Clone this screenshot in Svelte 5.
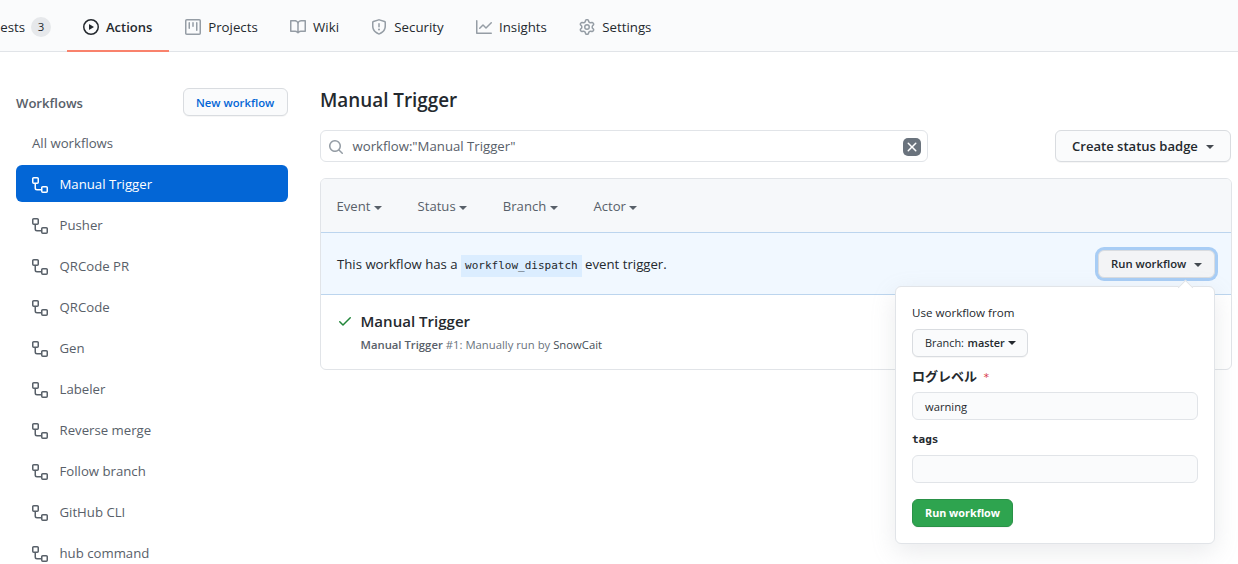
<script>
  const tabs = [
    { label: 'Actions', icon: 'play', active: true },
    { label: 'Projects', icon: 'project' },
    { label: 'Wiki', icon: 'book' },
    { label: 'Security', icon: 'shield' },
    { label: 'Insights', icon: 'graph' },
    { label: 'Settings', icon: 'gear' }
  ];

  const workflows = [
    'Manual Trigger', 'Pusher', 'QRCode PR', 'QRCode', 'Gen',
    'Labeler', 'Reverse merge', 'Follow branch', 'GitHub CLI', 'hub command'
  ];

  const filters = ['Event', 'Status', 'Branch', 'Actor'];

  const icons = {
    play: 'M1.5 8a6.5 6.5 0 1113 0 6.5 6.5 0 01-13 0zM8 0a8 8 0 100 16A8 8 0 008 0zM6.379 5.227A.25.25 0 006 5.442v5.117a.25.25 0 00.379.214l4.264-2.559a.25.25 0 000-.428L6.379 5.227z',
    project: 'M1.75 0A1.75 1.75 0 000 1.75v12.5C0 15.216.784 16 1.75 16h12.5A1.75 1.75 0 0016 14.25V1.75A1.75 1.75 0 0014.25 0H1.75zM1.5 1.75a.25.25 0 01.25-.25h12.5a.25.25 0 01.25.25v12.5a.25.25 0 01-.25.25H1.75a.25.25 0 01-.25-.25V1.75zM11.75 3a.75.75 0 00-.75.75v7.5a.75.75 0 001.5 0v-7.5a.75.75 0 00-.75-.75zm-8.25.75a.75.75 0 011.5 0v5.5a.75.75 0 01-1.5 0v-5.5zM8 3a.75.75 0 00-.75.75v3.5a.75.75 0 001.5 0v-3.5A.75.75 0 008 3z',
    book: 'M0 1.75A.75.75 0 01.75 1h4.253c1.227 0 2.317.59 3 1.501A3.744 3.744 0 0111.006 1h4.245a.75.75 0 01.75.75v10.5a.75.75 0 01-.75.75h-4.507a2.25 2.25 0 00-1.591.659l-.622.621a.75.75 0 01-1.06 0l-.622-.621A2.25 2.25 0 005.258 13H.75a.75.75 0 01-.75-.75V1.75zm8.755 3a2.25 2.25 0 012.25-2.25H14.5v9h-3.757c-.71 0-1.4.201-1.992.572l.004-7.322zm-1.504 7.324l.004-5.073-.002-2.253A2.25 2.25 0 005.003 2.5H1.5v9h3.757a3.75 3.75 0 011.994.574z',
    shield: 'M7.467.133a1.75 1.75 0 011.066 0l5.25 1.68A1.75 1.75 0 0115 3.48V7c0 1.566-.32 3.182-1.303 4.682-.983 1.498-2.585 2.813-5.032 3.855a1.7 1.7 0 01-1.33 0c-2.447-1.042-4.049-2.357-5.032-3.855C1.32 10.182 1 8.566 1 7V3.48a1.75 1.75 0 011.217-1.667l5.25-1.68zm.61 1.429a.25.25 0 00-.153 0l-5.25 1.68a.25.25 0 00-.174.238V7c0 1.358.275 2.666 1.057 3.86.784 1.194 2.121 2.34 4.366 3.297a.2.2 0 00.154 0c2.245-.956 3.582-2.104 4.366-3.298C13.225 9.666 13.5 8.36 13.5 7V3.48a.25.25 0 00-.174-.237l-5.25-1.68zM9 10.5a1 1 0 11-2 0 1 1 0 012 0zm-.25-5.75a.75.75 0 10-1.5 0v3a.75.75 0 001.5 0v-3z',
    graph: 'M1.5 1.75a.75.75 0 00-1.5 0v12.5c0 .414.336.75.75.75h14.5a.75.75 0 000-1.5H1.5V1.75zm14.28 2.53a.75.75 0 00-1.06-1.06L10 7.94 7.53 5.47a.75.75 0 00-1.06 0L3.22 8.72a.75.75 0 001.06 1.06L7 7.06l2.47 2.47a.75.75 0 001.06 0l5.25-5.25z',
    gear: 'M7.429 1.525a6.593 6.593 0 011.142 0c.036.003.108.036.137.146l.289 1.105c.147.56.55.967.997 1.189.174.086.341.183.501.29.417.278.97.423 1.53.27l1.102-.303c.11-.03.175.016.195.046.219.31.41.641.573.989.014.031.022.11-.059.19l-.815.806c-.411.406-.562.957-.53 1.456a4.588 4.588 0 010 .582c-.032.499.119 1.05.53 1.456l.815.806c.08.08.073.159.059.19a6.494 6.494 0 01-.573.99c-.02.029-.086.074-.195.045l-1.103-.303c-.559-.153-1.112-.008-1.529.27-.16.107-.327.204-.5.29-.449.222-.851.628-.998 1.189l-.289 1.105c-.029.11-.101.143-.137.146a6.613 6.613 0 01-1.142 0c-.036-.003-.108-.037-.137-.146l-.289-1.105c-.147-.56-.55-.967-.997-1.189a4.502 4.502 0 01-.501-.29c-.417-.278-.97-.423-1.53-.27l-1.102.303c-.11.03-.175-.016-.195-.046a6.492 6.492 0 01-.573-.989c-.014-.031-.022-.11.059-.19l.815-.806c.411-.406.562-.957.53-1.456a4.587 4.587 0 010-.582c.032-.499-.119-1.05-.53-1.456l-.815-.806c-.08-.08-.073-.159-.059-.19a6.44 6.44 0 01.573-.99c.02-.029.086-.075.195-.045l1.103.303c.559.153 1.112.008 1.529-.27.16-.107.327-.204.5-.29.449-.222.851-.628.998-1.189l.289-1.105c.029-.11.101-.143.137-.146zM8 0c-.236 0-.47.01-.701.03-.743.065-1.29.615-1.458 1.261l-.29 1.106c-.017.066-.078.158-.211.224a5.994 5.994 0 00-.668.386c-.123.082-.233.09-.3.071L3.27 2.776c-.644-.177-1.392.02-1.82.63a7.977 7.977 0 00-.704 1.217c-.315.675-.111 1.422.363 1.891l.815.806c.05.048.098.147.088.294a6.084 6.084 0 000 .772c.01.147-.038.246-.088.294l-.815.806c-.474.469-.678 1.216-.363 1.891.2.428.436.835.704 1.218.428.609 1.176.806 1.82.63l1.103-.303c.066-.019.176-.011.299.071.213.143.436.272.668.386.133.066.194.158.212.224l.289 1.106c.169.646.715 1.196 1.458 1.26a8.094 8.094 0 001.402 0c.743-.064 1.29-.614 1.458-1.26l.29-1.106c.017-.066.078-.158.211-.224a5.98 5.98 0 00.668-.386c.123-.082.233-.09.3-.071l1.102.302c.644.177 1.392-.02 1.82-.63.268-.382.505-.789.704-1.217.315-.675.111-1.422-.364-1.891l-.814-.806c-.05-.048-.098-.147-.088-.294a6.1 6.1 0 000-.772c-.01-.147.039-.246.088-.294l.814-.806c.475-.469.679-1.216.364-1.891a7.992 7.992 0 00-.704-1.218c-.428-.609-1.176-.806-1.82-.63l-1.103.303c-.066.019-.176.011-.299-.071a5.991 5.991 0 00-.668-.386c-.133-.066-.194-.158-.212-.224L10.16 1.29C9.99.645 9.444.095 8.701.031A8.094 8.094 0 008 0zm1.5 8a1.5 1.5 0 11-3 0 1.5 1.5 0 013 0zM11 8a3 3 0 11-6 0 3 3 0 016 0z',
    workflow: 'M0 1.75C0 .784.784 0 1.75 0h3.5C6.216 0 7 .784 7 1.75v3.5A1.75 1.75 0 015.25 7H4v4a1 1 0 001 1h4v-1.25C9 9.784 9.784 9 10.75 9h3.5c.966 0 1.75.784 1.75 1.75v3.5A1.75 1.75 0 0114.25 16h-3.5A1.75 1.75 0 019 14.25v-.75H5A2.5 2.5 0 012.5 11V7h-.75A1.75 1.75 0 010 5.25v-3.5zm1.75-.25a.25.25 0 00-.25.25v3.5c0 .138.112.25.25.25h3.5a.25.25 0 00.25-.25v-3.5a.25.25 0 00-.25-.25h-3.5zm9 9a.25.25 0 00-.25.25v3.5c0 .138.112.25.25.25h3.5a.25.25 0 00.25-.25v-3.5a.25.25 0 00-.25-.25h-3.5z',
    search: 'M11.5 7a4.499 4.499 0 11-8.998 0A4.499 4.499 0 0111.5 7zm-.82 4.74a6 6 0 111.06-1.06l3.04 3.04a.75.75 0 11-1.06 1.06l-3.04-3.04z',
    check: 'M13.78 4.22a.75.75 0 010 1.06l-7.25 7.25a.75.75 0 01-1.06 0L2.22 9.28a.75.75 0 011.06-1.06L6 10.94l6.72-6.72a.75.75 0 011.06 0z',
    x: 'M3.72 3.72a.75.75 0 011.06 0L8 6.94l3.22-3.22a.75.75 0 111.06 1.06L9.06 8l3.22 3.22a.75.75 0 11-1.06 1.06L8 9.06l-3.22 3.22a.75.75 0 01-1.06-1.06L6.94 8 3.72 4.78a.75.75 0 010-1.06z'
  };
</script>

{#snippet icon(name)}
  <svg class="icon" viewBox="0 0 16 16" width="16" height="16" aria-hidden="true">
    <path fill-rule="evenodd" d={icons[name]} />
  </svg>
{/snippet}

<div class="page">
  <nav class="tabs">
    <div class="tab clipped">uests<span class="counter">3</span></div>
    {#each tabs as tab}
      <div class="tab" class:active={tab.active}>{@render icon(tab.icon)}<span>{tab.label}</span></div>
    {/each}
  </nav>

  <div class="body">
    <aside>
      <div class="side-head">
        <h3>Workflows</h3>
        <button class="btn small link">New workflow</button>
      </div>
      <div class="side-item all">All workflows</div>
      {#each workflows as name, i}
        <div class="side-item" class:selected={i === 0}>{@render icon('workflow')}<span>{name}</span></div>
      {/each}
    </aside>

    <main>
      <h2>Manual Trigger</h2>
      <div class="toolbar">
        <div class="search">
          {@render icon('search')}
          <span class="query">workflow:"Manual Trigger"</span>
          <span class="clear">{@render icon('x')}</span>
        </div>
        <button class="btn badge-btn">Create status badge<i class="caret"></i></button>
      </div>

      <section class="box">
        <div class="filters">
          {#each filters as f}
            <span class="filter">{f}<i class="caret"></i></span>
          {/each}
        </div>
        <div class="dispatch">
          <p>This workflow has a <code>workflow_dispatch</code> event trigger.</p>
          <div class="run-wrap">
            <button class="btn small run">Run workflow<i class="caret"></i></button>
            <div class="popover">
              <div class="label from">Use workflow from</div>
              <button class="btn small branch"><span class="thin">Branch:</span> master<i class="caret"></i></button>
              <div class="label mono level">ログレベル<em>*</em></div>
              <div class="input">warning</div>
              <div class="label mono tags">tags</div>
              <div class="input"></div>
              <button class="btn small primary">Run workflow</button>
            </div>
          </div>
        </div>
        <div class="run-row">
          {@render icon('check')}
          <div>
            <h4>Manual Trigger</h4>
            <p class="meta"><b>Manual Trigger</b> #1: Manually run by <span>SnowCait</span></p>
          </div>
        </div>
      </section>
    </main>
  </div>
</div>

<style>
  :global(body) { background: #fff; overflow: hidden; }
  .page {
    width: 1238px;
    height: 564px;
    overflow: hidden;
    font: 13.25px/21px "Open Sans", "Noto Sans", "Noto Sans CJK JP", sans-serif;
    color: #24292e;
  }
  .page * { box-sizing: border-box; }
  h2, h3, h4, p { margin: 0; font-weight: 600; }
  .icon { display: block; flex: none; fill: currentColor; }
  .caret {
    display: inline-block;
    width: 0;
    height: 0;
    border: 4px solid transparent;
    border-top-color: currentColor;
    border-bottom: 0;
    flex: none;
  }

  .tabs {
    display: flex;
    height: 52px;
    background: #fafbfc;
    border-bottom: 1px solid #e1e4e8;
  }
  .tab {
    display: flex;
    align-items: center;
    gap: 7px;
    height: 52px;
    padding: 4px 16.2px 0;
    border-bottom: 2px solid transparent;
    white-space: nowrap;
  }
  .tab .icon { color: #959da5; }
  .tab.active { border-bottom-color: #f9826c; font-weight: 600; font-size: 13px; padding: 4px 16px 0; width: 102px; }
  .tab.active .icon { color: #24292e; }
  .clipped { width: 67px; padding-left: 0; padding-right: 16px; justify-content: flex-end; overflow: hidden; gap: 6px; }
  .counter {
    flex: none;
    width: 20px;
    height: 20px;
    border-radius: 10px;
    background: rgba(209, 213, 218, .5);
    font-size: 11.4px;
    font-weight: 500;
    line-height: 20px;
    text-align: center;
  }

  .body { display: flex; gap: 32px; padding: 36px 6px 0 16px; }
  aside { width: 272px; flex: none; color: #586069; }
  .side-head { display: flex; justify-content: space-between; align-items: center; height: 28px; margin-bottom: 8px; }
  h3 { font-size: 13.1px; padding-top: 2px; }
  .side-item {
    display: flex;
    align-items: center;
    gap: 11.5px;
    height: 37px;
    margin-bottom: 4px;
    padding: 1px 16px 0;
    border-radius: 6px;
    font-size: 13.2px;
  }
  .side-item .icon { margin-top: 1px; }
  .side-item.selected { background: #0366d6; color: #fff; }

  .btn {
    display: inline-flex;
    align-items: center;
    height: 32px;
    padding: 0 16px;
    border: 1px solid #d9dce0;
    border-radius: 6px;
    background: #fafbfc;
    box-shadow: 0 1px 0 rgba(27, 31, 35, .04);
    color: #24292e;
    font: 600 13.1px/20px "Open Sans", sans-serif;
    white-space: nowrap;
  }
  .btn.small { height: 28px; padding: 1px 12px 0; font-size: 11.3px; }
  .btn .caret { margin-left: 8px; margin-top: 2px; color: #444a50; }
  .btn.link { color: #0366d6; width: 105px; }

  main { flex: 1; min-width: 0; }
  h2 { font-size: 18.85px; line-height: 24px; height: 42px; }
  .toolbar { display: flex; justify-content: space-between; padding-right: 1px; margin-bottom: 16px; }
  .search {
    display: flex;
    align-items: center;
    width: 608px;
    height: 32px;
    padding: 0 6px 0 7px;
    border: 1px solid #e1e4e8;
    border-radius: 6px;
    color: #586069;
  }
  .search > .icon { color: #959da5; margin-top: 1px; }
  .query { flex: 1; margin-left: 8.5px; font-size: 13.2px; }
  .clear {
    display: flex;
    align-items: center;
    justify-content: center;
    width: 18px;
    height: 18px;
    margin-top: 2px;
    border-radius: 5px;
    background: #6a737d;
    color: #fff;
  }
  .badge-btn { font-size: 13.05px; width: 176px; }

  .box { border: 1px solid #e1e4e8; border-radius: 6px; height: 192px; }
  .filters {
    display: flex;
    align-items: center;
    gap: 35.6px;
    height: 53px;
    padding: 2px 15.5px 0;
    background: #f6f8fa;
    border-radius: 5px 5px 0 0;
    color: #586069;
    font-size: 13.1px;
  }
  .filter { display: flex; align-items: center; }
  .filter .caret { margin-left: 3.6px; margin-top: 3px; }
  .dispatch {
    display: flex;
    align-items: center;
    justify-content: space-between;
    height: 63px;
    padding: 0 16px;
    background: #f1f8ff;
    border-top: 1px solid #bcd5ee;
    border-bottom: 1px solid #bcd5ee;
  }
  .dispatch p { font-weight: 400; font-size: 13.2px; padding-top: 3px; }
  code {
    display: inline-block;
    height: 22px;
    padding: 0 4px;
    background: #dbedff;
    font: 11px/22px "DejaVu Sans Mono", monospace;
  }
  .run-wrap { position: relative; height: 28px; }
  .btn.run { background: #f3f4f6; width: 117px; box-shadow: 0 0 0 3px #a8cdf5; }
  .popover {
    position: absolute;
    top: 36px;
    right: 0;
    z-index: 1;
    display: flex;
    flex-direction: column;
    align-items: flex-start;
    width: 320px;
    height: 258px;
    padding: 16px;
    border: 1px solid #e1e4e8;
    border-radius: 6px;
    background: #fff;
    box-shadow: 0 8px 24px rgba(149, 157, 165, .2);
  }
  .popover::before {
    content: "";
    position: absolute;
    top: -5px;
    right: 23px;
    width: 10px;
    height: 10px;
    background: #fff;
    border: 1px solid #e1e4e8;
    border-right: 0;
    border-bottom: 0;
    transform: rotate(45deg);
  }
  .label { font-size: 11.6px; line-height: 18px; font-weight: 500; }
  .from { height: 26px; padding-top: 1px; }
  .btn.branch { width: 116px; font-size: 10.9px; }
  .branch .thin { font-weight: 400; margin-right: 3.5px; }
  .branch .caret { margin-left: 3px; margin-top: 0; color: #24292e; }
  .mono { font-family: "DejaVu Sans Mono", "Noto Sans CJK JP", monospace; font-weight: 700; font-size: 11px; }
  .level { margin: 11px 0 6px; font-size: 13px; height: 18px; }
  .level em { margin-left: 6px; font-style: normal; color: #d73a49; font-size: 11px; font-weight: 400; }
  .tags { margin: 11px 0 6px; }
  .input {
    width: 286px;
    height: 28px;
    padding: 1px 12px;
    border: 1px solid #e1e4e8;
    border-radius: 6px;
    background: #fafbfc;
    font-size: 11.2px;
    line-height: 26px;
  }
  .btn.primary {
    width: 101px;
    margin-top: 16px;
    background: #2ea44f;
    border-color: #2a9147;
    color: #fff;
    font-weight: 700;
    font-size: 10.8px;
  }

  .run-row { display: flex; gap: 7.5px; padding: 15px 16px; }
  .run-row .icon { color: #22863a; margin-top: 3px; }
  h4 { font-size: 15.05px; line-height: 22px; }
  .meta { font-size: 11.3px; line-height: 18px; margin-top: 4px; font-weight: 400; color: #6a737d; }
  .meta b { font-weight: 600; color: #586069; }
  .meta span { color: #444d56; }
</style>
